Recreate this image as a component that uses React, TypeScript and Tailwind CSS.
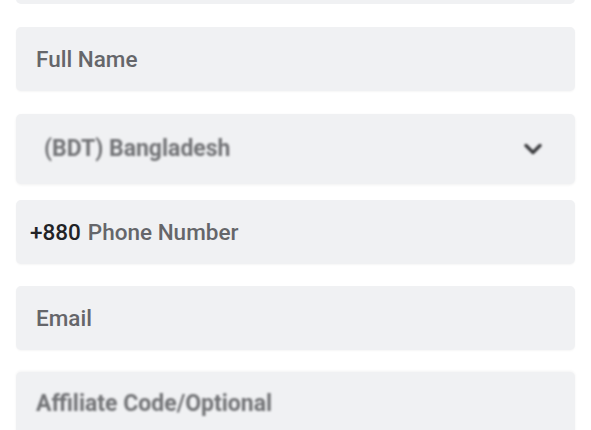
import { ChevronDown } from 'lucide-react';

const font = { fontFamily: 'Roboto, "Liberation Sans", sans-serif' };

function Field({ label, className = '' }: { label: string; className?: string }) {
  return (
    <div className={`flex h-[64px] items-center rounded-[5px] bg-[#f0f1f3] px-5 shadow-[0_1px_2px_rgba(0,0,0,0.04)] ${className}`}>
      <span className="mt-[1px] text-[22.5px] font-medium text-[#65666a]">{label}</span>
    </div>
  );
}

export default function App() {
  return (
    <div className="h-[430px] w-[591px] overflow-hidden bg-white px-4" style={font}>
      <div className="-mt-[60px] h-[64px] rounded-[5px] bg-[#f0f1f3]" />
      <Field label="Full Name" className="mt-[23px]" />
      <div className="mt-[23px] flex h-[70px] items-center justify-between rounded-[5px] bg-[#f0f1f3] pl-7 pr-[28px] shadow-[0_1px_3px_rgba(0,0,0,0.06)]">
        <span className="mt-[1px] text-[23px] font-bold text-[#727376] blur-[1.3px]">(BDT) Bangladesh</span>
        <ChevronDown className="h-7 w-7 text-[#3d3e40] blur-[0.8px]" strokeWidth={3} />
      </div>
      <div className="mt-[16px] flex h-[64px] items-center gap-[7px] rounded-[5px] bg-[#f0f1f3] px-[14px] shadow-[0_1px_2px_rgba(0,0,0,0.04)]">
        <span className="mt-[1px] text-[22.5px] font-medium text-[#222326]">+880</span>
        <span className="mt-[1px] text-[22.5px] font-medium text-[#65666a]">Phone Number</span>
      </div>
      <Field label="Email" className="mt-[22px]" />
      <div className="mt-[22px] flex h-[64px] items-center rounded-[5px] bg-[#f0f1f3] px-5 shadow-[0_-1px_3px_rgba(0,0,0,0.05)]">
        <span className="mt-[1px] text-[23px] font-bold text-[#727376] blur-[1.3px]">Affiliate Code/Optional</span>
      </div>
    </div>
  );
}
